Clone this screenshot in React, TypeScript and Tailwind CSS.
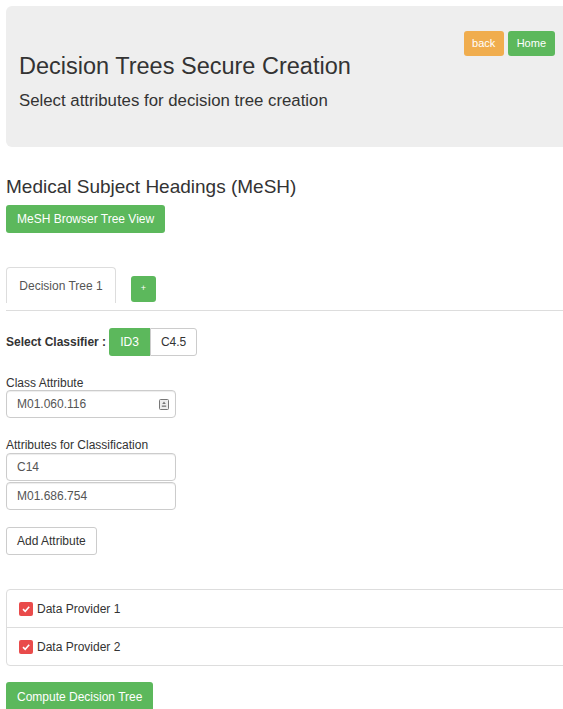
import { useState } from 'react'

const font = { fontFamily: '"Liberation Sans", Arial, Helvetica, sans-serif' }

function ProviderRow({ label, last }: { label: string; last?: boolean }) {
  const [checked, setChecked] = useState(true)
  return (
    <label
      className={`flex items-center gap-[4px] pl-[12px] text-[12px] text-[#333] ${
        last ? 'h-[37px]' : 'h-[38px] border-b border-[#ddd]'
      }`}
    >
      <span
        onClick={() => setChecked(!checked)}
        className={`flex h-[14px] w-[14px] items-center justify-center rounded-[2px] ${
          checked ? 'bg-[#e94b4b]' : 'border border-[#999] bg-white'
        }`}
      >
        {checked && (
          <svg width="10" height="10" viewBox="0 0 10 10">
            <path d="M2 5.2 L4.2 7.3 L8.2 2.8" stroke="#fff" strokeWidth="1.6" fill="none" />
          </svg>
        )}
      </span>
      {label}
    </label>
  )
}

function TextField({ value, withIcon }: { value: string; withIcon?: boolean }) {
  return (
    <div className="flex h-[28px] w-[170px] items-center justify-between rounded-[4px] border border-[#ccc] bg-white pl-[10px] pr-[6px] text-[12px] text-[#555] shadow-[inset_0_1px_1px_rgba(0,0,0,0.075)]">
      <span>{value}</span>
      {withIcon && (
        <svg width="10" height="11" viewBox="0 0 10 11">
          <rect x="0.5" y="0.5" width="9" height="10" rx="1" fill="#eee" stroke="#777" />
          <path d="M5 2.5 L3.2 5 H6.8 Z" fill="#777" />
          <rect x="2.8" y="6.5" width="4.4" height="1.3" fill="#777" />
        </svg>
      )}
    </div>
  )
}

export default function App() {
  const [classifier, setClassifier] = useState<'ID3' | 'C4.5'>('ID3')

  return (
    <div className="w-[563px] overflow-hidden bg-white" style={font}>
      <div className="w-[620px] pl-[6px] pt-[6px] pb-[20px] text-[#333]">
        {/* Header panel */}
        <div className="flex h-[141px] justify-between rounded-[6px] bg-[#eee] pl-[13px] pr-[65px]">
          <div className="pt-[43px]">
            <h1 className="text-[23.5px] leading-[34px]">Decision Trees Secure Creation</h1>
            <p className="mt-[6px] text-[16.8px] leading-[24px]">
              Select attributes for decision tree creation
            </p>
          </div>
          <div className="flex gap-[4px] pt-[25px]">
            <button className="h-[25px] w-[40px] rounded-[3px] bg-[#f0ad4e] text-[11px] text-white">
              back
            </button>
            <button className="h-[25px] rounded-[3px] bg-[#5cb85c] px-[9px] text-[11px] text-white">
              Home
            </button>
          </div>
        </div>

        <h3 className="mt-[28px] text-[19px] leading-[24px]">Medical Subject Headings (MeSH)</h3>
        <button className="mt-[6px] h-[28px] rounded-[3px] bg-[#5cb85c] px-[11px] text-[12px] text-white">
          MeSH Browser Tree View
        </button>

        {/* Tabs */}
        <div className="mt-[34px] flex items-end border-b border-[#ddd] pb-[7px]">
          <div className="flex h-[36px] w-[110px] items-center justify-center rounded-t-[4px] border border-b-0 border-[#ddd] text-[12px] text-[#555]">
            Decision Tree 1
          </div>
          <button className="mb-[1px] ml-[15px] h-[26px] w-[25px] rounded-[3px] bg-[#5cb85c] text-[9px] text-white">
            +
          </button>
        </div>

        {/* Classifier choice */}
        <div className="mt-[17px] flex items-center">
          <span className="text-[12px] font-bold">Select Classifier :</span>
          <div className="ml-[3px] flex">
            {(['ID3', 'C4.5'] as const).map((c) => (
              <button
                key={c}
                onClick={() => setClassifier(c)}
                className={`h-[28px] text-[12px] ${
                  c === 'ID3' ? 'w-[41px] rounded-l-[3px]' : 'w-[47px] rounded-r-[3px]'
                } ${
                  classifier === c
                    ? 'bg-[#5cb85c] text-white'
                    : 'border border-[#ccc] bg-white text-[#333]'
                }`}
              >
                {c}
              </button>
            ))}
          </div>
        </div>

        <div className="mt-[20px] text-[12px] leading-[14px]">Class Attribute</div>
        <div>
          <TextField value="M01.060.116" withIcon />
        </div>

        <div className="mt-[20px] text-[12px] leading-[14px]">Attributes for Classification</div>
        <div className="mt-[1px] flex flex-col gap-[1px]">
          <TextField value="C14" />
          <TextField value="M01.686.754" />
        </div>

        <button className="mt-[17px] h-[28px] rounded-[3px] border border-[#ccc] bg-white px-[10px] text-[12px] text-[#333]">
          Add Attribute
        </button>

        {/* Data providers */}
        <div className="mt-[34px] rounded-[4px] border border-[#ddd]">
          <ProviderRow label="Data Provider 1" />
          <ProviderRow label="Data Provider 2" last />
        </div>

        <button className="mt-[16px] h-[30px] rounded-[3px] bg-[#5cb85c] px-[11px] text-[12px] text-white">
          Compute Decision Tree
        </button>
      </div>
    </div>
  )
}
